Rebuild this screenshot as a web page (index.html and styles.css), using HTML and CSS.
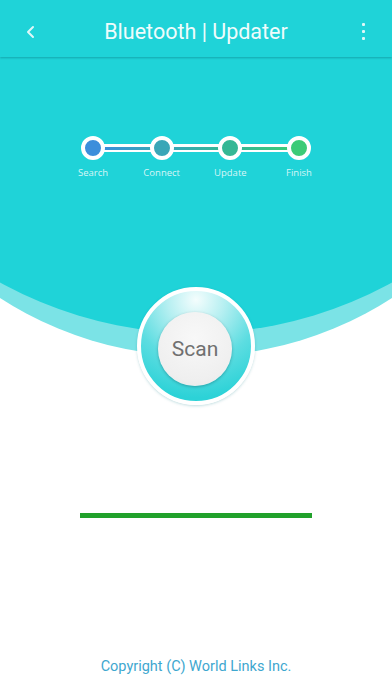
FILE: index.html
```html
<!DOCTYPE html>
<html>
<head>
<meta charset="utf-8">
<link rel="stylesheet" href="styles.css">
</head>
<body>
<div class="app">
  <div class="wave-light"></div>
  <div class="wave-dark"></div>
  <header class="topbar">
    <span class="back">
      <svg width="10" height="14" viewBox="0 0 10 14"><polyline points="7,2 2,7 7,12" fill="none" stroke="#dff7f8" stroke-width="2" stroke-linecap="round" stroke-linejoin="round"/></svg>
    </span>
    <h1 class="title">Bluetooth | Updater</h1>
    <span class="more"><i></i><i></i><i></i></span>
  </header>
  <main class="content">
    <div class="stepper">
      <span class="dot dot-1"></span>
      <span class="link link-1"></span>
      <span class="dot dot-2"></span>
      <span class="link link-2"></span>
      <span class="dot dot-3"></span>
      <span class="link link-3"></span>
      <span class="dot dot-4"></span>
    </div>
    <div class="labels">
      <span>Search</span><span>Connect</span><span>Update</span><span>Finish</span>
    </div>
    <div class="scan-ring">
      <button class="scan">Scan</button>
    </div>
    <div class="progress"></div>
    <footer class="copyright">Copyright (C) World Links Inc.</footer>
  </main>
</div>
</body>
</html>
```
FILE: styles.css
```css
* { box-sizing: border-box; }
html, body { margin: 0; padding: 0; background: #fff; }
.app {
  position: relative;
  width: 392px;
  height: 696px;
  overflow: hidden;
  background: #fff;
  font-family: Roboto, "Noto Sans", sans-serif;
}
.wave-dark {
  position: absolute;
  left: -210px;
  top: -479px;
  width: 812px;
  height: 812px;
  border-radius: 50%;
  background: #1fd3d8;
  z-index: 0;
}
.wave-light {
  position: absolute;
  left: -164px;
  top: -364px;
  width: 720px;
  height: 720px;
  border-radius: 50%;
  background: #7be3e6;
  z-index: 0;
}
.topbar {
  position: relative;
  z-index: 2;
  height: 57px;
  background: #1fd3d8;
  box-shadow: 0 1px 2px rgba(0, 80, 90, 0.35);
  display: flex;
  align-items: center;
  padding: 6px 26px 0;
}
.back {
  display: flex;
  width: 40px;
  height: 14px;
}
.title {
  flex: 1;
  margin: 0;
  font-weight: 400;
  font-size: 21.5px;
  color: #effcfc;
  text-align: center;
}
.more {
  display: flex;
  flex-direction: column;
  align-items: flex-end;
  gap: 4px;
  width: 40px;
  padding-right: 1px;
}
.more i { display: block; width: 3px; height: 3px; background: #dff7f8; border-radius: 1px; }
.content {
  position: relative;
  z-index: 1;
  display: flex;
  flex-direction: column;
  align-items: center;
}
.stepper {
  margin-top: 79px;
  display: flex;
  align-items: center;
  width: 230px;
}
.dot {
  width: 24px;
  height: 24px;
  border-radius: 50%;
  border: 4px solid #fff;
  flex: none;
  position: relative;
  z-index: 1;
}
.dot-1 { background: #3c8edb; }
.dot-2 { background: #39a6b7; }
.dot-3 { background: #35b795; }
.dot-4 { background: #3ccb77; }
.link {
  flex: 1;
  height: 8px;
  margin: 0 -3px;
  background: #fff;
  display: flex;
  align-items: center;
}
.link::before {
  content: "";
  display: block;
  width: 100%;
  height: 3px;
}
.link-1::before { background: linear-gradient(90deg, #3c8edb, #39a6b7); }
.link-2::before { background: linear-gradient(90deg, #39a6b7, #35b795); }
.link-3::before { background: linear-gradient(90deg, #35b795, #3ccb77); }
.labels {
  margin-top: 7px;
  display: grid;
  grid-template-columns: repeat(4, 68.67px);
  justify-content: center;
  font-family: "Open Sans", sans-serif;
  font-size: 9.5px;
  line-height: 12px;
  color: rgba(255, 255, 255, 0.82);
  text-align: center;
}
.scan-ring {
  margin-top: 108px;
  width: 118px;
  height: 118px;
  border-radius: 50%;
  border: 4px solid #fff;
  background: radial-gradient(circle at 50% 8%, #f4fdfd 0%, #b5eff1 25%, #5ddde1 55%, #2cd2d7 85%);
  box-shadow: 0 1px 3px rgba(0, 120, 130, 0.25);
  display: flex;
  align-items: center;
  justify-content: center;
}
.scan {
  width: 74px;
  height: 74px;
  margin-top: 6px;
  margin-left: -2px;
  border-radius: 50%;
  border: none;
  background: radial-gradient(circle at 50% 35%, #f8f8f8 0%, #efefef 70%, #e4e4e4 100%);
  box-shadow: 0 1px 3px rgba(0, 60, 70, 0.35);
  font-family: Roboto, sans-serif;
  font-size: 21px;
  color: #707070;
  padding: 0;
}
.progress {
  margin-top: 108px;
  width: 232px;
  height: 5px;
  background: #21a12b;
}
.copyright {
  margin-top: 139px;
  font-size: 14.5px;
  line-height: 20px;
  color: #3ea7cf;
}
```
